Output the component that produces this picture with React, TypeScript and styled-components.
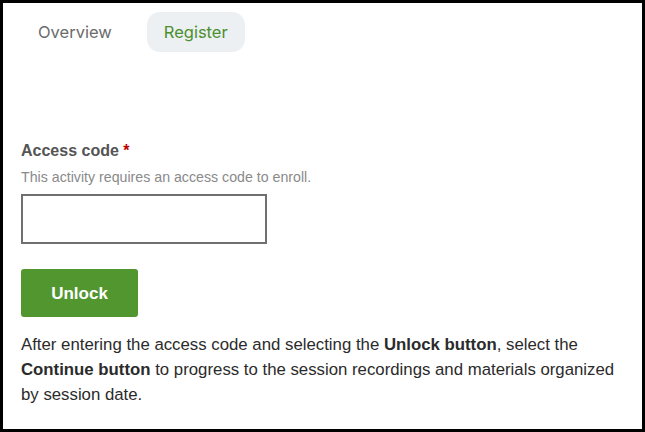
import React from "react";
import styled, { createGlobalStyle } from "styled-components";

const Global = createGlobalStyle`
  html, body { margin: 0; padding: 0; background: #fff; }
  body { font-family: "Liberation Sans", Arial, sans-serif; }
  * { box-sizing: border-box; }
`;

const Frame = styled.div`
  width: 645px;
  height: 432px;
  border: 3px solid #000;
  background: #fff;
  padding: 9px 18px 0 18px;
  display: flex;
  flex-direction: column;
`;

const Tabs = styled.nav`
  display: flex;
  align-items: center;
  gap: 18px;
`;

const Tab = styled.button<{ $active?: boolean }>`
  height: 40px;
  padding: 0 17px;
  border: none;
  border-radius: 13px;
  font-family: Inter, "Noto Sans", sans-serif;
  font-size: 16.5px;
  background: ${(p) => (p.$active ? "#ecf0f3" : "transparent")};
  color: ${(p) => (p.$active ? "#4b8f2e" : "#6b6b6b")};
  cursor: pointer;
`;

const Form = styled.section`
  margin-top: 89px;
  display: flex;
  flex-direction: column;
  align-items: flex-start;
`;

const Label = styled.label`
  font-family: "Liberation Sans", Arial, sans-serif;
  font-weight: bold;
  font-size: 16px;
  color: #545454;
  line-height: 20px;
`;

const Req = styled.span`
  color: #c00000;
`;

const Help = styled.div`
  margin-top: 8px;
  font-size: 14.2px;
  color: #8a8a8a;
  line-height: 16px;
`;

const Input = styled.input`
  margin-top: 9px;
  width: 246px;
  height: 50px;
  border: 2px solid #707070;
  background: #fff;
  outline: none;
`;

const Button = styled.button`
  margin-top: 25px;
  width: 117px;
  height: 48px;
  border: none;
  border-radius: 3px;
  background: #52962f;
  color: #fff;
  font-family: "Liberation Sans", Arial, sans-serif;
  font-weight: bold;
  font-size: 17px;
  padding-top: 3px;
  cursor: pointer;
`;

const Paragraph = styled.p`
  margin: 15px 0 0 0;
  font-size: 16.8px;
  line-height: 25px;
  color: #2b2b2b;
  max-width: 605px;
`;

export default function App() {
  return (
    <>
      <Global />
      <Frame>
        <Tabs>
          <Tab>Overview</Tab>
          <Tab $active>Register</Tab>
        </Tabs>
        <Form>
          <Label>
            Access code <Req>*</Req>
          </Label>
          <Help>This activity requires an access code to enroll.</Help>
          <Input type="text" aria-label="Access code" />
          <Button>Unlock</Button>
          <Paragraph>
            After entering the access code and selecting the <b>Unlock button</b>, select the{" "}
            <b>Continue button</b> to progress to the session recordings and materials organized by
            session date.
          </Paragraph>
        </Form>
      </Frame>
    </>
  );
}
